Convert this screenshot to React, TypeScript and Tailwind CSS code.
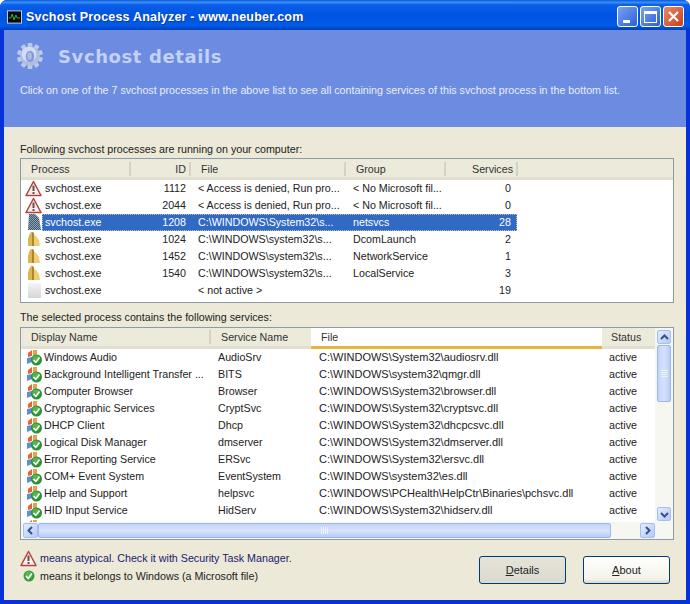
import * as React from 'react'

const font = "font-['Liberation_Sans',Arial,sans-serif]"

function Warning({ size = 17 }: { size?: number }) {
  return (
    <svg width={size} height={size} viewBox="0 0 17 17" className="shrink-0">
      <path d="M8.5 1.5 L16 15.5 H1 Z" fill="#fbf3f0" stroke="#b5403c" strokeWidth="1.5" strokeLinejoin="round" />
      <path d="M8.5 5.5 L8.5 11" stroke="#6b4a48" strokeWidth="2" />
      <rect x="7.5" y="12" width="2" height="2" fill="#6b4a48" />
    </svg>
  )
}

function Folder() {
  return (
    <svg width="17" height="17" viewBox="0 0 17 17" className="shrink-0">
      <path d="M4 4 L6 1 H8 V15 H3 V8 Z" fill="#dcb654" />
      <path d="M8 3 L11 5 L14 9 L15 15 H8 Z" fill="#f0cf74" />
      <path d="M7 1 L9 2 V15 H7 Z" fill="#a88636" />
    </svg>
  )
}

function Dithered() {
  return (
    <svg width="17" height="17" viewBox="0 0 17 17" className="shrink-0">
      <defs>
        <pattern id="dth" width="2" height="2" patternUnits="userSpaceOnUse">
          <rect width="2" height="2" fill="#8fa0b0" />
          <rect width="1" height="1" fill="#3c5a70" />
          <rect x="1" y="1" width="1" height="1" fill="#3c5a70" />
        </pattern>
      </defs>
      <path d="M4 0 H10 L14 4 L16 16 H3 Z" fill="url(#dth)" />
    </svg>
  )
}

function Blank() {
  return <div className="w-[17px] h-[17px] shrink-0 pl-[3px] pr-[1px] py-[1px]"><div className="h-full bg-[linear-gradient(180deg,#f4f4f4,#d6d6d6)]" /></div>
}

function GreenCheck({ size = 12 }: { size?: number }) {
  return (
    <svg width={size} height={size} viewBox="0 0 12 12" className="shrink-0">
      <circle cx="6" cy="6" r="5.5" fill="#3c9a3c" />
      <circle cx="5.5" cy="5" r="3.5" fill="#58b84e" />
      <path d="M3 6 L5.2 8.4 L9 3.6" fill="none" stroke="#fff" strokeWidth="1.6" />
    </svg>
  )
}

function ServiceIcon() {
  return (
    <svg width="18" height="17" viewBox="0 0 18 17" className="shrink-0">
      <path d="M3 4 L7 1 V7 L3 8 Z" fill="#e2663a" />
      <path d="M8 1 L12 1 V6 L8 7 Z" fill="#e8a24a" />
      <path d="M2 9 L7 8 V13 L2 15 Z" fill="#5d8fd8" />
      <circle cx="11.5" cy="11" r="5.5" fill="#2f8f38" />
      <circle cx="11" cy="10" r="3.6" fill="#55b64c" />
      <path d="M8.5 11 L10.8 13.4 L14.5 8.6" fill="none" stroke="#fff" strokeWidth="1.6" />
    </svg>
  )
}

function Gear() {
  const teeth = Array.from({ length: 10 }, (_, i) => i * 36)
  return (
    <svg width="28" height="28" viewBox="0 0 30 30" className="shrink-0">
      {teeth.map((a) => (
        <rect key={a} x="12.5" y="1" width="5" height="6" rx="1" fill="#bcc9e8" transform={`rotate(${a} 15 15)`} />
      ))}
      <circle cx="15" cy="15" r="10.5" fill="#aebde0" />
      <circle cx="14" cy="13" r="8" fill="#d3dcf2" />
      <ellipse cx="15" cy="15.5" rx="4.5" ry="6" fill="#7f9ad6" />
      <ellipse cx="14.5" cy="15" rx="2.5" ry="4" fill="#a8bce8" />
    </svg>
  )
}

function HeaderCell({ label, right, className }: { label: string; right?: boolean; className?: string }) {
  return (
    <div className={`flex items-center ${right ? 'justify-end' : 'justify-between pl-[10px]'} ${className ?? ''}`}>
      <span>{label}</span>
      <div className={`w-[2px] h-[14px] bg-[#d6d3c3] ${right ? 'ml-[3px]' : ''}`} />
    </div>
  )
}

const processRows = [
  { icon: <Warning />, id: '1112', file: '< Access is denied, Run pro...', group: '< No Microsoft fil...', count: '0' },
  { icon: <Warning />, id: '2044', file: '< Access is denied, Run pro...', group: '< No Microsoft fil...', count: '0' },
  { icon: <Dithered />, id: '1208', file: 'C:\\WINDOWS\\System32\\s...', group: 'netsvcs', count: '28', selected: true },
  { icon: <Folder />, id: '1024', file: 'C:\\WINDOWS\\system32\\s...', group: 'DcomLaunch', count: '2' },
  { icon: <Folder />, id: '1452', file: 'C:\\WINDOWS\\system32\\s...', group: 'NetworkService', count: '1' },
  { icon: <Folder />, id: '1540', file: 'C:\\WINDOWS\\system32\\s...', group: 'LocalService', count: '3' },
  { icon: <Blank />, id: '', file: '< not active >', group: '', count: '19' },
]

const services = [
  ['Windows Audio', 'AudioSrv', 'C:\\WINDOWS\\System32\\audiosrv.dll'],
  ['Background Intelligent Transfer ...', 'BITS', 'C:\\WINDOWS\\system32\\qmgr.dll'],
  ['Computer Browser', 'Browser', 'C:\\WINDOWS\\System32\\browser.dll'],
  ['Cryptographic Services', 'CryptSvc', 'C:\\WINDOWS\\System32\\cryptsvc.dll'],
  ['DHCP Client', 'Dhcp', 'C:\\WINDOWS\\System32\\dhcpcsvc.dll'],
  ['Logical Disk Manager', 'dmserver', 'C:\\WINDOWS\\System32\\dmserver.dll'],
  ['Error Reporting Service', 'ERSvc', 'C:\\WINDOWS\\System32\\ersvc.dll'],
  ['COM+ Event System', 'EventSystem', 'C:\\WINDOWS\\system32\\es.dll'],
  ['Help and Support', 'helpsvc', 'C:\\WINDOWS\\PCHealth\\HelpCtr\\Binaries\\pchsvc.dll'],
  ['HID Input Service', 'HidServ', 'C:\\WINDOWS\\System32\\hidserv.dll'],
]

function ProcessList() {
  return (
    <div className="h-[145px] border border-[#8c9ba6] bg-white overflow-hidden">
      <div className="h-[21px] flex bg-[#ebeadb] border-b-[3px] border-b-[#e2dfd0] text-[#333] pt-[2px] pl-[1px]">
        <HeaderCell label="Process" className="w-[109px] !pl-[9px]" />
        <HeaderCell label="ID" right className="w-[60px]" />
        <HeaderCell label="File" className="w-[155px]" />
        <HeaderCell label="Group" className="w-[100px]" />
        <HeaderCell label="Services" right className="w-[72px]" />
      </div>
      {processRows.map((r, i) => (
        <div key={i} className="h-[17px] flex items-center pl-[4px]">
          {r.icon}
          <div className={`h-[17px] flex items-center w-[475px] whitespace-nowrap ${r.selected ? 'bg-[#316ac5] text-white outline outline-1 outline-dotted -outline-offset-1 outline-[#c8c090]' : 'text-[#222]'}`}>
            <span className="w-[82px] pl-[3px]">svchost.exe</span>
            <span className="w-[62px] text-right">{r.id}</span>
            <span className="w-[167px] pl-[12px]">{r.file}</span>
            <span className="w-[100px]">{r.group}</span>
            <span className="w-[58px] text-right">{r.count}</span>
          </div>
        </div>
      ))}
    </div>
  )
}

function ScrollButton({ d, className }: { d: string; className?: string }) {
  return (
    <div className={`flex items-center justify-center bg-[linear-gradient(135deg,#e4edfe,#b4c9f6)] border border-[#a8bdf0] rounded-[2px] shrink-0 ${className ?? ''}`}>
      <svg width="9" height="9" viewBox="0 0 9 9">
        <path d={d} fill="none" stroke="#3a4f8c" strokeWidth="2" />
      </svg>
    </div>
  )
}

function Grip({ vertical }: { vertical?: boolean }) {
  const cls = vertical ? 'w-[7px] h-px bg-[#eef3ff]' : 'w-px h-[7px] bg-[#eef3ff]'
  return (
    <>
      <div className={cls} />
      <div className={cls} />
      <div className={cls} />
      <div className={cls} />
    </>
  )
}

function ServiceList() {
  return (
    <div className="h-[213px] border border-[#8c9ba6] bg-white flex flex-col overflow-hidden">
      <div className="flex flex-1 min-h-0">
        <div className="w-[634px] shrink-0 overflow-hidden">
          <div className="h-[21px] flex bg-[#ebeadb] text-[#333]">
            <div className="w-[190px] pl-[10px] flex items-center justify-between border-b-[3px] border-b-[#e2dfd0]">
              <span>Display Name</span>
              <div className="w-[2px] h-[14px] bg-[#d6d3c3]" />
            </div>
            <div className="w-[100px] pl-[10px] flex items-center border-b-[3px] border-b-[#e2dfd0]">Service Name</div>
            <div className="w-[291px] pl-[10px] flex items-center bg-white border-b-[3px] border-b-[#e9b43c]">File</div>
            <div className="flex-1 pl-[9px] flex items-center border-b-[3px] border-b-[#e2dfd0]">Status</div>
          </div>
          {services.map((s) => (
            <div key={s[0]} className="h-[17px] flex items-center pl-[4px] text-[#222] whitespace-nowrap">
              <ServiceIcon />
              <span className="w-[175px] pl-[1px]">{s[0]}</span>
              <span className="w-[101px]">{s[1]}</span>
              <span className="w-[290px] text-[11px]">{s[2]}</span>
              <span>active</span>
            </div>
          ))}
          <div className="h-[17px] flex items-center pl-[4px]"><ServiceIcon /></div>
        </div>
        <div className="flex-1 flex flex-col bg-[#f7f7f2] pl-[2px] pr-[2px] pt-[2px] pb-[1px]">
          <ScrollButton d="M1 6 L4.5 2.5 L8 6" className="h-[14px]" />
          <div className="h-[57px] mt-[1px] bg-[linear-gradient(90deg,#c3d4fc,#d6e2fe,#b9ccf8)] border border-[#9db6ec] rounded-[2px] flex flex-col items-center justify-center gap-[1px]">
            <Grip vertical />
          </div>
          <div className="flex-1" />
          <ScrollButton d="M1 3 L4.5 6.5 L8 3" className="h-[14px]" />
        </div>
      </div>
      <div className="h-[17px] flex shrink-0 bg-[#f7f7f2] pr-[18px] pt-[1px] pb-[1px] pl-[2px]">
        <ScrollButton d="M6 1 L2.5 4.5 L6 8" className="w-[15px]" />
        <div className="w-[573px] bg-[linear-gradient(180deg,#c3d4fc,#d6e2fe,#b9ccf8)] border border-[#9db6ec] rounded-[2px] flex items-center justify-center gap-[1px]">
          <Grip />
        </div>
        <div className="flex-1" />
        <ScrollButton d="M3 1 L6.5 4.5 L3 8" className="w-[15px]" />
      </div>
    </div>
  )
}

function XpButton({ children, active }: { children: React.ReactNode; active?: boolean }) {
  return (
    <button className={`w-[87px] h-[28px] pt-[1px] text-[11px] rounded-[3px] border border-[#003c74] text-[#222] ${active ? 'bg-[linear-gradient(180deg,#e6e4d8,#dcdace)]' : 'bg-[linear-gradient(180deg,#fff,#f3f2ea_85%,#dcd8c8)]'}`}>
      {children}
    </button>
  )
}

function TitleButton({ children, className }: { children: React.ReactNode; className?: string }) {
  return (
    <div className={`w-[21px] h-[21px] rounded-[3px] border border-white flex items-center justify-center ${className ?? ''}`}>
      {children}
    </div>
  )
}

export default function App() {
  return (
    <div className={`w-[690px] h-[604px] flex flex-col overflow-hidden bg-[#0831d9] rounded-t-[7px] text-[10.7px] leading-[17px] ${font}`}>
      <div className="h-[30px] shrink-0 flex items-center pl-[7px] pr-[6px] pt-[3px] bg-[linear-gradient(180deg,#0a5ad6_0%,#3a8ffb_8%,#0a5ee8_16%,#0054e3_50%,#005ae8_85%,#0040b8_100%)]">
        <svg width="15" height="14" viewBox="0 0 16 14" className="shrink-0">
          <rect x="0.5" y="0.5" width="15" height="13" fill="#0a0a0a" stroke="#c8d4e8" />
          <path d="M2 8 L4 8 L5.5 4 L7.5 10 L9.5 5 L11 8 L14 8" fill="none" stroke="#38c838" />
        </svg>
        <span className="ml-[4px] mt-[1px] text-white font-bold text-[12.5px] tracking-[0.2px] [text-shadow:1px_1px_0_#0a3a9c] whitespace-nowrap">
          Svchost Process Analyzer - www.neuber.com
        </span>
        <div className="flex-1" />
        <div className="flex gap-[2px]">
          <TitleButton className="bg-[linear-gradient(135deg,#7aa2f2,#2c5fd8)]"><div className="w-[7px] h-[3px] bg-white mt-[9px] -ml-[3px]" /></TitleButton>
          <TitleButton className="bg-[linear-gradient(135deg,#7aa2f2,#2c5fd8)]"><div className="w-[13px] h-[12px] border border-white border-t-[3px]" /></TitleButton>
          <TitleButton className="bg-[linear-gradient(135deg,#e88a6a,#c8401c)]">
            <svg width="13" height="13" viewBox="0 0 13 13"><path d="M2 2 L11 11 M11 2 L2 11" stroke="#fff" strokeWidth="2.2" /></svg>
          </TitleButton>
        </div>
      </div>
      <div className="flex-1 flex flex-col mx-[4px] mb-[4px] bg-[#ece9d8] min-h-0">
        <div className="h-[97px] shrink-0 bg-[#6b8ce0] pl-[16px]">
          <div className="flex items-center h-[51px] pt-[1px] -ml-[4px]">
            <Gear />
            <span className="ml-[14px] text-[18px] font-bold font-['DejaVu_Sans',sans-serif] text-[#c4d1f4] tracking-[0.6px]">Svchost details</span>
          </div>
          <div className="text-[#e8eefb] mt-[1px] whitespace-nowrap">
            Click on one of the 7 svchost processes in the above list to see all containing services of this svchost process in the bottom list.
          </div>
        </div>
        <div className="flex-1 flex flex-col pl-[16px] pr-[12px] text-[#222]">
          <div className="h-[31px] flex items-end shrink-0 whitespace-nowrap">Following svchost processes are running on your computer:</div>
          <ProcessList />
          <div className="h-[24px] flex items-end pb-[1px] shrink-0 whitespace-nowrap">The selected process contains the following services:</div>
          <ServiceList />
          <div className="flex justify-between mt-[9px] pr-[4px]">
            <div className="flex flex-col">
              <div className="h-[18px] flex items-center gap-[3px] text-[#1a1a70]"><Warning />means atypical. Check it with Security Task Manager.</div>
              <div className="h-[18px] flex items-center gap-[5px] pl-[3px] text-[#222]"><GreenCheck />means it belongs to Windows (a Microsoft file)</div>
            </div>
            <div className="flex gap-[17px] mt-[7px]">
              <XpButton active><u>D</u>etails</XpButton>
              <XpButton><u>A</u>bout</XpButton>
            </div>
          </div>
        </div>
      </div>
    </div>
  )
}
